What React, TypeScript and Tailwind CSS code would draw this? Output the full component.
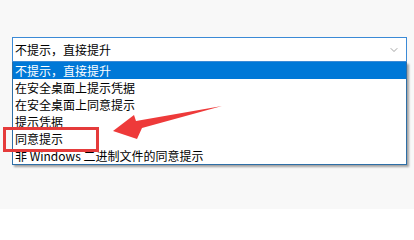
import { ChevronDown } from "lucide-react";

const options = [
  "不提示，直接提升",
  "在安全桌面上提示凭据",
  "在安全桌面上同意提示",
  "提示凭据",
  "同意提示",
  "非 Windows 二进制文件的同意提示",
];

export default function App() {
  return (
    <div
      className="relative h-[209px] w-[414px] overflow-hidden bg-[#f8f8f8] pt-[37px] pl-[12px] pr-[7px] text-[12px] text-black"
      style={{ fontFamily: '"Noto Sans CJK SC", "Noto Sans", sans-serif' }}
    >
      {/* select */}
      <div className="flex h-[25px] items-center justify-between border border-[#3b8ad6] bg-white pl-[2px] pr-[6px]">
        <span className="leading-[16px]">{options[0]}</span>
        <ChevronDown className="h-[12px] w-[12px] text-[#6b6b6b]" strokeWidth={1.25} />
      </div>

      {/* open list */}
      <div className="flex flex-col border border-t-0 border-[#2e6fa7] bg-white shadow-[2px_2px_2px_rgba(0,0,0,0.35)]">
        {options.map((o, i) => (
          <div
            key={o}
            className={
              i === 0
                ? "h-[17px] bg-[#0078d7] pl-[2px] leading-[18px] text-white"
                : "h-[17px] pl-[2px] leading-[18px]"
            }
          >
            {o}
          </div>
        ))}
      </div>

      {/* annotation */}
      <div className="absolute left-[3px] top-[127px] h-[25px] w-[96px] border-[3px] border-[#e53b3b]" />
      <svg className="absolute left-0 top-0" width="414" height="209" viewBox="0 0 414 209">
        <polygon
          points="113,131 134,115 136,121 222,106 142,128 137,139"
          fill="#ee3a3a"
        />
      </svg>
    </div>
  );
}
